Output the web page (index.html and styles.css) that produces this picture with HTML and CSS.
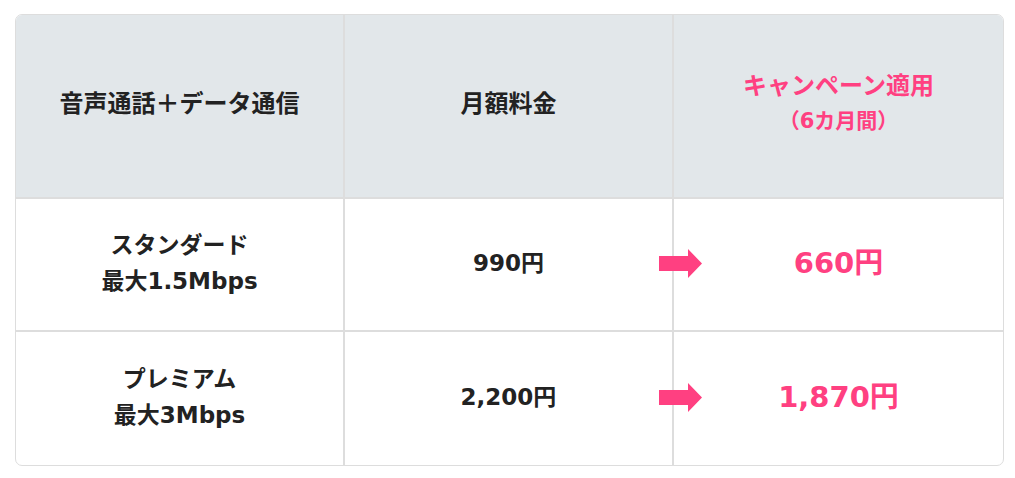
FILE: index.html
```html
<!DOCTYPE html>
<html lang="ja">
<head>
<meta charset="utf-8">
<link rel="stylesheet" href="styles.css">
</head>
<body>
<div class="plan-table">
  <div class="cell head">音声通話＋データ通信</div>
  <div class="cell head">月額料金</div>
  <div class="cell head campaign-head">
    <span class="line">キャンペーン適用</span>
    <span class="line small">（6カ月間）</span>
  </div>

  <div class="cell label">
    <span class="line">スタンダード</span>
    <span class="line">最大1.5Mbps</span>
  </div>
  <div class="cell price">990円</div>
  <div class="cell sale">
    <svg class="arrow" width="43" height="29" viewBox="0 0 43 29"><polygon points="0,7 29,7 29,0 43,14.5 29,29 29,22 0,22" fill="#ff4081"/></svg>
    660円
  </div>

  <div class="cell label last">
    <span class="line">プレミアム</span>
    <span class="line">最大3Mbps</span>
  </div>
  <div class="cell price last">2,200円</div>
  <div class="cell sale last">
    <svg class="arrow" width="43" height="29" viewBox="0 0 43 29"><polygon points="0,7 29,7 29,0 43,14.5 29,29 29,22 0,22" fill="#ff4081"/></svg>
    1,870円
  </div>
</div>
</body>
</html>
```

FILE: styles.css
```css
html, body {
  margin: 0;
  padding: 0;
  background: #ffffff;
}
body {
  padding: 14px 11px 0 15px;
  font-family: "DejaVu Sans", "Noto Sans CJK JP", sans-serif;
  color: #222222;
}
.plan-table {
  display: grid;
  grid-template-columns: 1fr 1fr 1fr;
  grid-template-rows: 184px 133px 133px;
  border: 1px solid #dddddd;
  border-radius: 7px;
  overflow: hidden;
}
.cell {
  box-sizing: border-box;
  display: flex;
  flex-direction: column;
  align-items: center;
  justify-content: center;
  text-align: center;
  font-weight: 700;
  font-size: 23px;
  line-height: 36px;
  border-right: 2px solid #dddddd;
  border-bottom: 2px solid #dddddd;
  position: relative;
}
.cell:nth-child(3n) {
  border-right: none;
}
.cell.last {
  border-bottom: none;
}
.head {
  background: #e2e7ea;
  font-size: 24px;
  padding-bottom: 4px;
}
.campaign-head {
  color: #ff4081;
  line-height: 35px;
}
.line {
  display: block;
}
.small {
  font-size: 21px;
}
.label {
  padding-bottom: 3px;
}
.price {
  font-size: 23px;
  padding-bottom: 3px;
}
.sale {
  color: #ff4081;
  font-size: 29px;
  padding-bottom: 3px;
}
.arrow {
  position: absolute;
  left: -15px;
  top: 50%;
  margin-top: -16px;
}
```
